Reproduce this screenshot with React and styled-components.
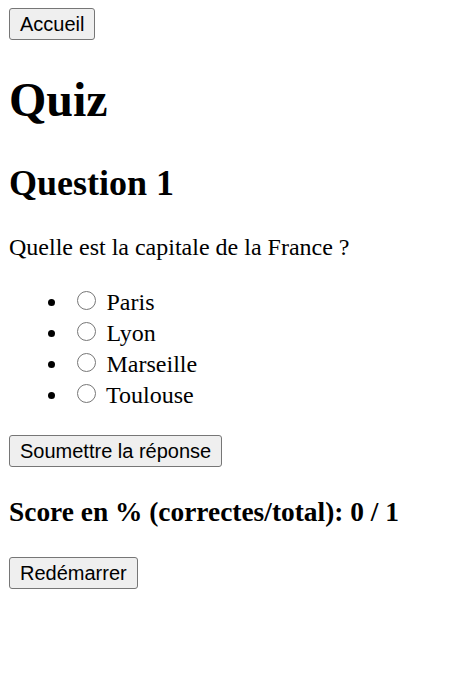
import React, { useState } from "react";
import styled, { createGlobalStyle } from "styled-components";

const Global = createGlobalStyle`
  html, body { background: #fff; }
  body {
    margin: 8px 8px 8px 9px;
    font-family: "Liberation Serif", "Times New Roman", serif;
    font-size: 24px;
    color: #000;
  }
`;

const Nav = styled.nav`
  display: block;
`;

const Button = styled.button`
  font-family: "Liberation Sans", Arial, sans-serif;
  font-size: 20px;
  line-height: 23px;
  color: #000;
  background: #efefef;
  border: 1px solid #767676;
  border-radius: 3px;
  padding: 4px 10px 3px;
  margin: 0;
  cursor: pointer;
`;

const Title = styled.h1`
  font-size: 48px;
  font-weight: bold;
  margin: 32px 0 35px;
`;

const QuestionTitle = styled.h2`
  font-size: 36px;
  font-weight: bold;
  margin: 30px 0;
`;

const Prompt = styled.p`
  margin: 24px 0;
`;

const Options = styled.ul`
  margin: 25px 0;
  padding-left: 60px;
  list-style: disc;
`;

const Option = styled.li`
  height: 31px;
`;

const Radio = styled.input`
  width: 19.5px;
  height: 19.5px;
  margin: 4.5px 4.5px 0 7.5px;
  vertical-align: baseline;
`;

const Score = styled.h3`
  font-size: 27.4px;
  font-weight: bold;
  margin: 30px 0 29px;
`;

const options = ["Paris", "Lyon", "Marseille", "Toulouse"];

export default function App() {
  const [choice, setChoice] = useState(null);
  return (
    <>
      <Global />
      <Nav>
        <Button>Accueil</Button>
      </Nav>
      <Title>Quiz</Title>
      <div>
        <QuestionTitle>Question 1</QuestionTitle>
        <Prompt>Quelle est la capitale de la France ?</Prompt>
        <Options>
          {options.map((o) => (
            <Option key={o}>
              <label>
                <Radio
                  type="radio"
                  name="answer"
                  checked={choice === o}
                  onChange={() => setChoice(o)}
                />{" "}
                {o}
              </label>
            </Option>
          ))}
        </Options>
        <Button>Soumettre la réponse</Button>
      </div>
      <Score>Score en % (correctes/total): 0 / 1</Score>
      <Button>Redémarrer</Button>
    </>
  );
}
